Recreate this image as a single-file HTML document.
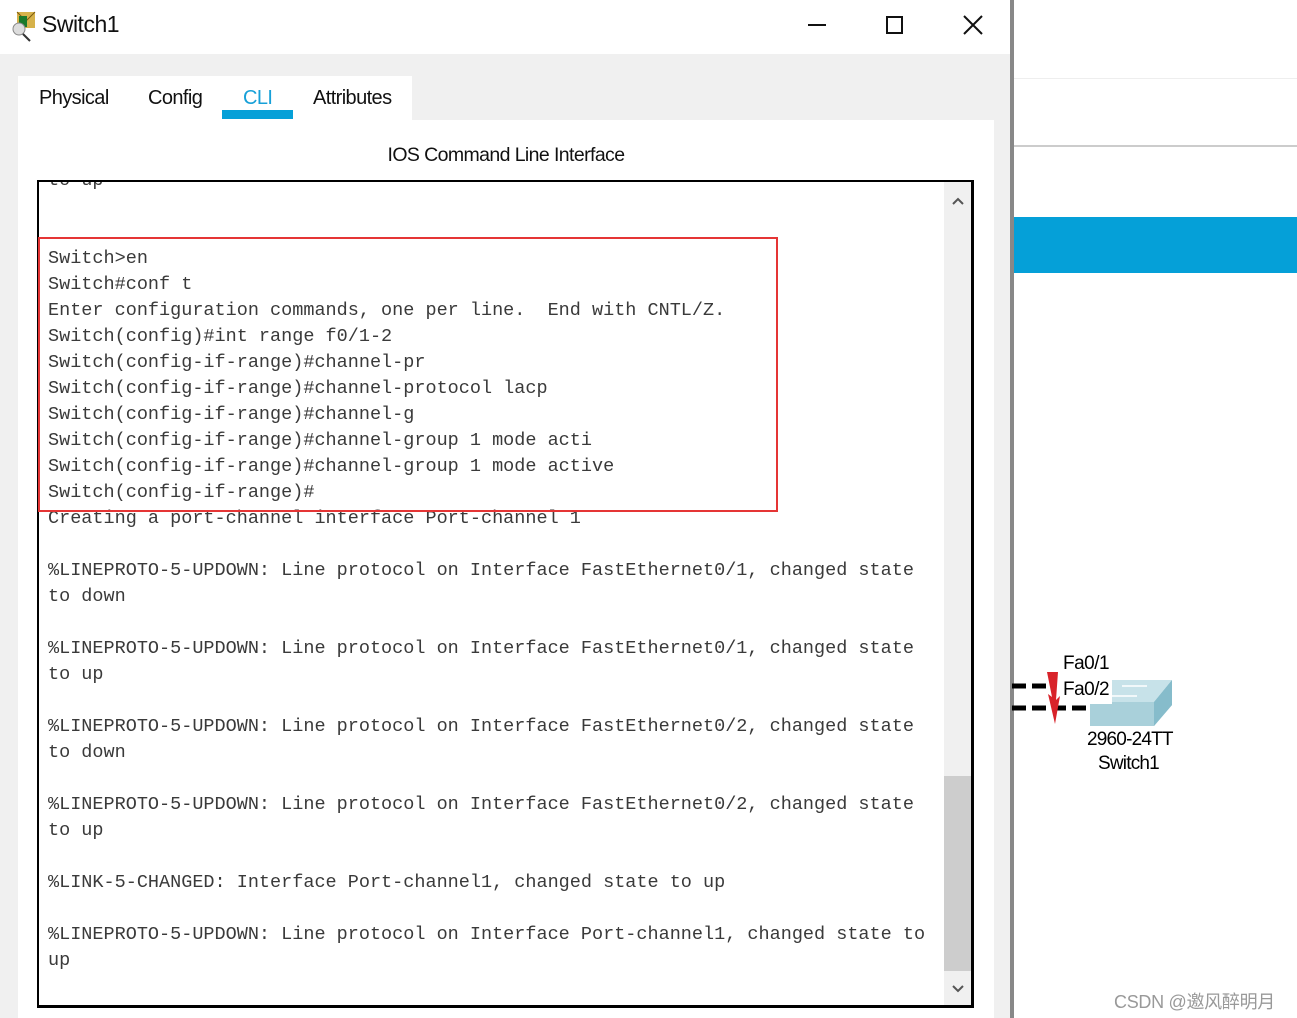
<!DOCTYPE html>
<html><head><meta charset="utf-8"><style>
*{margin:0;padding:0;box-sizing:border-box}
body{width:1297px;height:1018px;overflow:hidden;background:#fff;position:relative;font-family:"Liberation Sans",sans-serif}
.abs{position:absolute}
.term{position:absolute;left:37px;top:180px;width:937px;height:828px;border:2px solid #000;border-right-width:3px;border-bottom-width:3px;background:#fff;overflow:hidden}
.txt{position:absolute;left:9px;top:-14px;font-family:"Liberation Mono",monospace;font-size:18.5px;line-height:26px;color:#3a3a3a;white-space:pre}
.tab{position:absolute;top:87px;font-size:20px;color:#111;letter-spacing:-0.6px}
</style></head><body>
<div class="abs" style="left:1014px;top:0;width:283px;height:1018px;background:#fff"></div>
<div class="abs" style="left:1014px;top:78px;width:283px;height:1px;background:#eee"></div>
<div class="abs" style="left:1014px;top:145px;width:283px;height:2px;background:#ccc"></div>
<div class="abs" style="left:1014px;top:217px;width:283px;height:56px;background:#05a0d8"></div>
<div class="abs" style="left:1010px;top:0;width:4px;height:1018px;background:#888"></div>
<svg class="abs" style="left:1012px;top:650px" width="180" height="80">
<path d="M0 36 H40 M0 58 H78" stroke="#000" stroke-width="5" stroke-dasharray="14 6"/>
<polygon points="35,22 46,22 44,50 48,46 43,74 36,44 40,47" fill="#d8232a"/>
<polygon points="78,52 142,52 160,30 160,55 142,76 78,76" fill="#a9d0da"/>
<polygon points="96,30 160,30 142,52 78,52" fill="#c7e2e9"/>
<polygon points="142,52 160,30 160,55 142,76" fill="#86bccb"/>
<path d="M110 36 H135 M100 46 H125" stroke="#fff" stroke-width="1.5"/>
<rect x="48" y="26" width="52" height="28" fill="#fff"/>
</svg>
<div class="abs" style="left:1063px;top:654px;font-size:19px;line-height:20px;height:16px;overflow:hidden;letter-spacing:-0.5px">Fa0/1</div>
<div class="abs" style="left:1063px;top:679px;font-size:19px;letter-spacing:-0.5px">Fa0/2</div>
<div class="abs" style="left:1087px;top:728px;font-size:19px;line-height:24px;letter-spacing:-0.8px">2960-24TT<br><span style="margin-left:11px">Switch1</span></div>
<div class="abs" style="left:1114px;top:988px;font-size:18px;color:#999;font-family:'Liberation Sans','Noto Sans CJK SC',sans-serif;letter-spacing:-0.3px">CSDN @邀风醉明月</div>
<div class="abs" style="left:0;top:0;width:1010px;height:54px;background:#fff"></div>
<svg class="abs" style="left:10px;top:10px" width="30" height="32"><rect x="7" y="2" width="18" height="16" fill="#d6b24a"/><path d="M7 2 L16 11 L25 2" stroke="#7a5a10" fill="none"/><rect x="9" y="6" width="8" height="11" fill="#1a7a2a"/><circle cx="9" cy="19" r="6" fill="#ddd" stroke="#888"/><path d="M13 24 L20 31" stroke="#333" stroke-width="2"/></svg>
<div class="abs" style="left:42px;top:11px;font-size:23px;color:#111;letter-spacing:-0.5px">Switch1</div>
<div class="abs" style="left:808px;top:24px;width:18px;height:2px;background:#111"></div>
<div class="abs" style="left:886px;top:16px;width:17px;height:18px;border:2px solid #111"></div>
<svg class="abs" style="left:962px;top:14px" width="22" height="22"><path d="M2 2L20 20M20 2L2 20" stroke="#111" stroke-width="2"/></svg>
<div class="abs" style="left:0;top:54px;width:1010px;height:964px;background:#f0f0f0"></div>
<div class="abs" style="left:18px;top:76px;width:394px;height:50px;background:#fff"></div>
<div class="abs" style="left:18px;top:120px;width:976px;height:898px;background:#fff"></div>
<div class="tab" style="left:39px">Physical</div>
<div class="tab" style="left:148px">Config</div>
<div class="tab" style="left:243px;color:#17a0d8">CLI</div>
<div class="tab" style="left:313px">Attributes</div>
<div class="abs" style="left:222px;top:110px;width:71px;height:9px;background:#05a0d8"></div>
<div class="abs" style="left:18px;top:144px;width:976px;text-align:center;font-size:19.5px;color:#111;letter-spacing:-0.6px">IOS Command Line Interface</div>
<div class="term">
<div class="txt">to up


Switch>en
Switch#conf t
Enter configuration commands, one per line.  End with CNTL/Z.
Switch(config)#int range f0/1-2
Switch(config-if-range)#channel-pr
Switch(config-if-range)#channel-protocol lacp
Switch(config-if-range)#channel-g
Switch(config-if-range)#channel-group 1 mode acti
Switch(config-if-range)#channel-group 1 mode active
Switch(config-if-range)#
Creating a port-channel interface Port-channel 1

%LINEPROTO-5-UPDOWN: Line protocol on Interface FastEthernet0/1, changed state
to down

%LINEPROTO-5-UPDOWN: Line protocol on Interface FastEthernet0/1, changed state
to up

%LINEPROTO-5-UPDOWN: Line protocol on Interface FastEthernet0/2, changed state
to down

%LINEPROTO-5-UPDOWN: Line protocol on Interface FastEthernet0/2, changed state
to up

%LINK-5-CHANGED: Interface Port-channel1, changed state to up

%LINEPROTO-5-UPDOWN: Line protocol on Interface Port-channel1, changed state to
up</div>
<div class="abs" style="left:905px;top:0;width:27px;height:826px;background:#f0f0f0"></div>
<div class="abs" style="left:905px;top:594px;width:27px;height:195px;background:#cdcdcd"></div>
<svg class="abs" style="left:912px;top:14px" width="14" height="10"><path d="M2 8L7 3L12 8" stroke="#555" stroke-width="2" fill="none"/></svg>
<svg class="abs" style="left:912px;top:802px" width="14" height="10"><path d="M2 2L7 7L12 2" stroke="#555" stroke-width="2" fill="none"/></svg>
</div>
<div class="abs" style="left:38px;top:237px;width:740px;height:275px;border:2px solid #e53535"></div>
</body></html>
